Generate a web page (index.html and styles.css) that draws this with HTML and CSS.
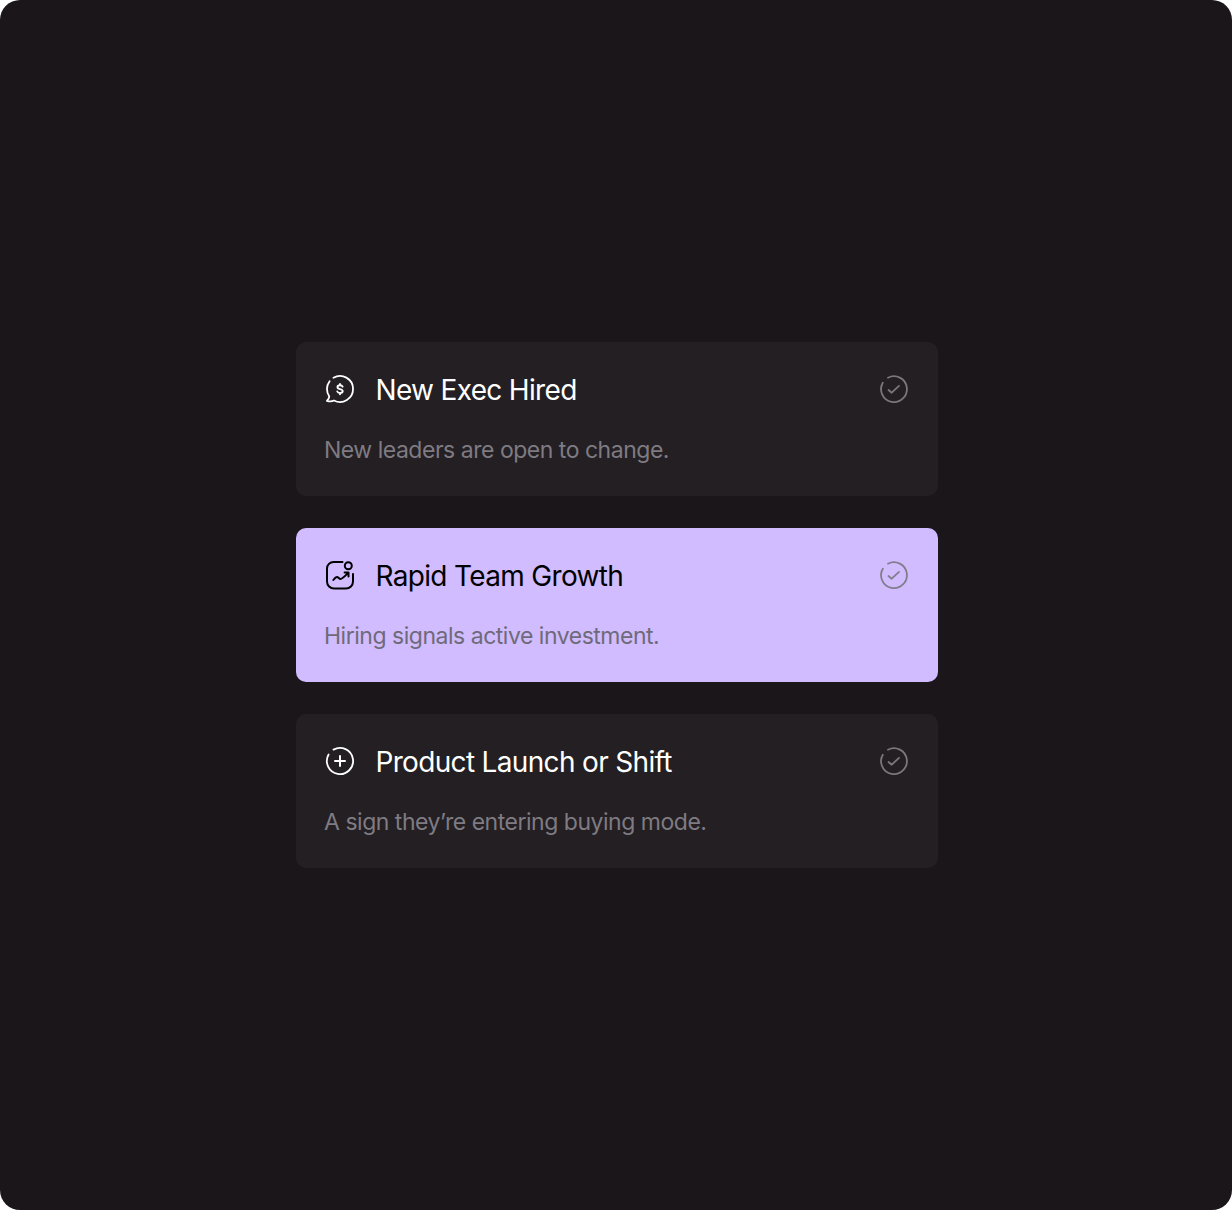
FILE: index.html
```html
<!DOCTYPE html>
<html lang="en">
<head>
<meta charset="utf-8">
<title>Signals</title>
<link rel="stylesheet" href="styles.css">
</head>
<body>
<main class="frame">
  <section class="list">
    <article class="card">
      <div class="head">
        <svg class="icon" viewBox="0 0 32 32" fill="none" stroke="currentColor" stroke-width="1.8" stroke-linecap="round" stroke-linejoin="round">
          <path d="M9.500 4.750A13 13 0 1 1 10 27.500C8 28.500 5 28.500 3 27.800C4.500 26.500 5.300 25 5.200 23.300A13 13 0 0 1 5.600 8.200"/>
          <path d="M18.600 13.700C18.200 12.800 17.200 12.300 16 12.300C14.500 12.300 13.500 13 13.500 14.200C13.500 16.800 18.700 15.400 18.700 18.100C18.700 19.300 17.600 20 16 20C14.700 20 13.700 19.500 13.300 18.500M16 11V12.300M16 20V21.300" stroke-width="1.9"/>
        </svg>
        <h2 class="title">New Exec Hired</h2>
        <svg class="check" viewBox="0 0 28 28" fill="none" stroke="currentColor" stroke-width="1.8" stroke-linecap="round" stroke-linejoin="round">
          <path d="M8 2.700A12.900 12.900 0 1 1 2.800 7.700"/>
          <path d="M8.500 15L11.700 17.700L19 10.900"/>
        </svg>
      </div>
      <p class="desc">New leaders are open to change.</p>
    </article>
    <article class="card card-active">
      <div class="head">
        <svg class="icon" viewBox="0 0 32 32" fill="none" stroke="currentColor" stroke-width="2" stroke-linecap="round" stroke-linejoin="round">
          <path d="M18.500 3H9.500A6.500 6.500 0 0 0 3 9.500V22.500A7 7 0 0 0 10 29.500H22A7 7 0 0 0 29 22.500V15"/>
          <circle cx="24.300" cy="6.700" r="3.500"/>
          <path d="M9.300 21C10.800 19 11.800 18 13 18C14.500 18 15 20 16.600 20C18.300 20 20.500 17.600 24.300 13.800M20.600 13.500H24.500V17.400"/>
        </svg>
        <h2 class="title">Rapid Team Growth</h2>
        <svg class="check" viewBox="0 0 28 28" fill="none" stroke="currentColor" stroke-width="1.8" stroke-linecap="round" stroke-linejoin="round">
          <path d="M8 2.700A12.900 12.900 0 1 1 2.800 7.700"/>
          <path d="M8.500 15L11.700 17.700L19 10.900"/>
        </svg>
      </div>
      <p class="desc">Hiring signals active investment.</p>
    </article>
    <article class="card">
      <div class="head">
        <svg class="icon" viewBox="0 0 32 32" fill="none" stroke="currentColor" stroke-width="1.8" stroke-linecap="round" stroke-linejoin="round">
          <path d="M9.500 4.600A13.100 13.100 0 1 1 4.600 9.500"/>
          <path d="M16 11V21M11 16H21" stroke-width="2"/>
        </svg>
        <h2 class="title">Product Launch or Shift</h2>
        <svg class="check" viewBox="0 0 28 28" fill="none" stroke="currentColor" stroke-width="1.8" stroke-linecap="round" stroke-linejoin="round">
          <path d="M8 2.700A12.900 12.900 0 1 1 2.800 7.700"/>
          <path d="M8.500 15L11.700 17.700L19 10.900"/>
        </svg>
      </div>
      <p class="desc">A sign they’re entering buying mode.</p>
    </article>
  </section>
</main>
</body>
</html>
```
FILE: styles.css
```css
* { box-sizing: border-box; }
html, body { margin: 0; background: #fff; }
.frame {
  width: 1232px;
  height: 1210px;
  padding-left: 2px;
  border-radius: 20px;
  background: #1a161a;
  display: flex;
  align-items: center;
  justify-content: center;
  font-family: Inter, "Liberation Sans", sans-serif;
}
.list {
  width: 642px;
  display: flex;
  flex-direction: column;
  gap: 32px;
}
.card {
  height: 154px;
  padding: 31px 28px 0;
  border-radius: 10px;
  background: #231f23;
  color: #fff;
}
.card-active {
  background: #d0bcff;
  color: #000;
}
.head {
  display: flex;
  align-items: center;
  height: 32px;
}
.icon {
  width: 32px;
  height: 32px;
  flex: none;
}
.title {
  margin: 2px 0 0 19.500px;
  flex: 1;
  font-size: 28px;
  line-height: 34px;
  font-weight: 400;
  letter-spacing: -0.67px;
}
.check {
  width: 28px;
  height: 28px;
  flex: none;
  margin-right: 2px;
  color: #7b777d;
}
.card-active .check { color: #827d8c; }
.desc {
  margin: 31px 0 0;
  font-size: 23px;
  line-height: 28px;
  letter-spacing: -0.48px;
  color: #7f7b82;
}
.card-active .desc { color: #6f6a78; }
```
